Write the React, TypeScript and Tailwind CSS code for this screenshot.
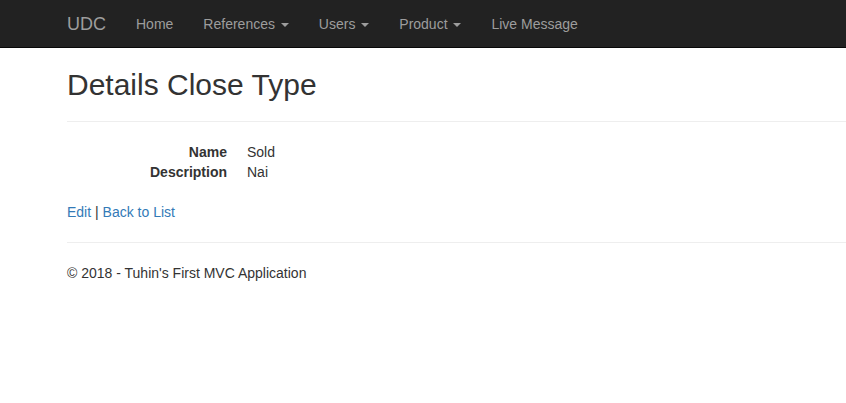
import React from 'react';

const navItems = [
  { label: 'Home', caret: false },
  { label: 'References', caret: true },
  { label: 'Users', caret: true },
  { label: 'Product', caret: true },
  { label: 'Live Message', caret: false },
];

function Caret() {
  return (
    <span className="ml-[2px] inline-block h-0 w-0 border-t-4 border-r-4 border-l-4 border-r-transparent border-l-transparent border-t-[#9d9d9d] align-middle" />
  );
}

export default function App() {
  return (
    <div
      className="min-h-[403px] w-full overflow-hidden bg-white text-[14px] leading-[20px] text-[#333]"
      style={{ fontFamily: '"Liberation Sans", Arial, sans-serif' }}
    >
      {/* Navbar */}
      <nav className="flex h-[48px] items-center border-b border-[#080808] bg-[#222] pl-[52px]">
        <a className="px-[15px] text-[18px] leading-[20px] text-[#9d9d9d]">UDC</a>
        {navItems.map((item) => (
          <a key={item.label} className="px-[15px] text-[14px] leading-[20px] text-[#9d9d9d]">
            {item.label}
            {item.caret && (
              <>
                {' '}
                <Caret />
              </>
            )}
          </a>
        ))}
      </nav>

      {/* Body */}
      <div className="pl-[67px]">
        <h2 className="mt-[20px] mb-[10px] text-[30px] leading-[33px] font-medium">Details Close Type</h2>
        <hr className="mt-[20px] mb-[20px] border-t border-[#eee]" />

        <dl className="mb-[20px]">
          <div className="flex">
            <dt className="w-[160px] text-right font-bold">Name</dt>
            <dd className="ml-[20px]">Sold</dd>
          </div>
          <div className="flex">
            <dt className="w-[160px] text-right font-bold">Description</dt>
            <dd className="ml-[20px]">Nai</dd>
          </div>
        </dl>

        <p className="mb-[20px]">
          <a className="text-[#337ab7]">Edit</a> | <a className="text-[#337ab7]">Back to List</a>
        </p>

        <hr className="border-t border-[#eee]" />
        <footer>
          <p className="mt-[20px]">© 2018 - Tuhin's First MVC Application</p>
        </footer>
      </div>
    </div>
  );
}
